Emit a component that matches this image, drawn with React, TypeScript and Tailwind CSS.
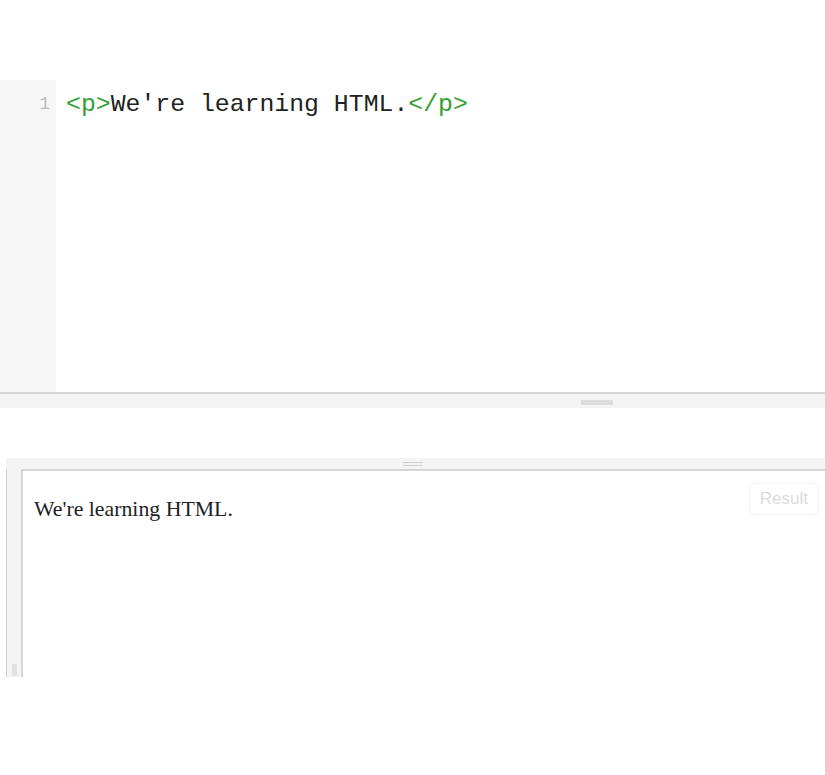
export default function App() {
    return (
        <div className="w-[825px] h-[775px] bg-white relative overflow-hidden">
            <div className="h-[80px]" />

            {/* editor */}
            <div className="flex h-[314px] border-b-2 border-[#d6d6d6]">
                <div className="w-[56px] bg-[#f7f7f7] flex justify-end pr-[6px] pt-[12px]">
                    <span className="text-[#bcbcbc] text-[18px] leading-[24px]" style={{ fontFamily: '"Liberation Mono", monospace' }}>1</span>
                </div>
                <div className="flex-1 pl-[10px] pt-[11px] bg-white">
                    <div className="text-[24.8px] leading-[26px] text-[#222]" style={{ fontFamily: '"Liberation Mono", monospace' }}>
                        <span className="text-[#34a034]">&lt;p&gt;</span>We're learning HTML.<span className="text-[#34a034]">&lt;/p&gt;</span>
                    </div>
                </div>
            </div>
            <div className="h-[14px] bg-[#f4f4f4] flex justify-center pl-[369px]">
                <div className="w-[32px] h-[5px] bg-[#dcdcdc] mt-[6px]" />
            </div>

            <div className="h-[50px]" />

            {/* result panel */}
            <div className="ml-[6px] flex flex-col h-[219px]">
                <div className="h-[11px] bg-[#f4f4f4] flex flex-col items-center gap-[2px] pt-[4px] pr-[6px]">
                    <div className="w-[20px] h-px bg-[#cfcfcf]" />
                    <div className="w-[20px] h-px bg-[#cfcfcf]" />
                </div>
                <div className="flex flex-1">
                    <div className="w-[15px] bg-[#f4f4f4] border-l border-[#cfcfcf] flex flex-col justify-end items-center">
                        <div className="w-[5px] h-[12px] bg-[#e2e2e2] mb-[1px]" />
                    </div>
                    <div className="flex-1 border-l-2 border-t-2 border-[#d6d6d6] bg-white relative">
                        <p className="pl-[11px] pt-[24px] text-[21.8px] leading-[28px] text-[#222]" style={{ fontFamily: '"Liberation Serif", serif' }}>
                            We're learning HTML.
                        </p>
                        <div className="absolute right-[6px] top-[12px] px-[10px] py-[2px] border border-[#f3f3f3] rounded text-[#dcdcdc] text-[17px]" style={{ fontFamily: '"Liberation Sans", sans-serif' }}>
                            Result
                        </div>
                    </div>
                </div>
            </div>
        </div>
    );
}
